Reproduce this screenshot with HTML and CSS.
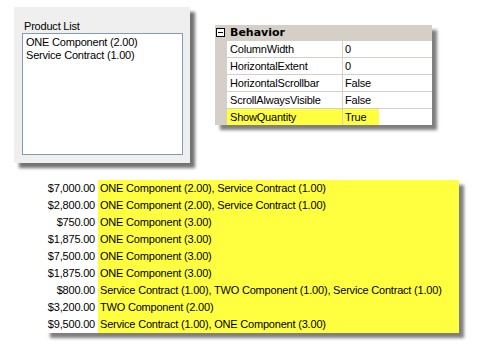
FILE: index.html
```html
<!DOCTYPE html>
<html>
<head>
<meta charset="utf-8">
<link rel="stylesheet" href="styles.css">
</head>
<body>
<div class="top">
  <div class="panel">
    <div class="label">Product List</div>
    <div class="listbox">
      <div>ONE Component (2.00)</div>
      <div>Service Contract (1.00)</div>
    </div>
  </div>
  <div class="grid">
    <div class="header"><span class="minus"></span><span class="cat">Behavior</span></div>
    <div class="row"><span class="name">ColumnWidth</span><span class="val">0</span></div>
    <div class="row"><span class="name">HorizontalExtent</span><span class="val">0</span></div>
    <div class="row"><span class="name">HorizontalScrollbar</span><span class="val">False</span></div>
    <div class="row"><span class="name">ScrollAlwaysVisible</span><span class="val">False</span></div>
    <div class="row"><span class="name hl">ShowQuantity</span><span class="val"><span class="hlv">True</span></span></div>
  </div>
</div>
<div class="table">
  <div class="trow"><span class="amt">$7,000.00</span><span class="desc">ONE Component (2.00), Service Contract (1.00)</span></div>
  <div class="trow"><span class="amt">$2,800.00</span><span class="desc">ONE Component (2.00), Service Contract (1.00)</span></div>
  <div class="trow"><span class="amt">$750.00</span><span class="desc">ONE Component (3.00)</span></div>
  <div class="trow"><span class="amt">$1,875.00</span><span class="desc">ONE Component (3.00)</span></div>
  <div class="trow"><span class="amt">$7,500.00</span><span class="desc">ONE Component (3.00)</span></div>
  <div class="trow"><span class="amt">$1,875.00</span><span class="desc">ONE Component (3.00)</span></div>
  <div class="trow"><span class="amt">$800.00</span><span class="desc">Service Contract (1.00), TWO Component (1.00), Service Contract (1.00)</span></div>
  <div class="trow"><span class="amt">$3,200.00</span><span class="desc">TWO Component (2.00)</span></div>
  <div class="trow"><span class="amt">$9,500.00</span><span class="desc">Service Contract (1.00), ONE Component (3.00)</span></div>
</div>
</body>
</html>
```
FILE: styles.css
```css
* { box-sizing: border-box; }
html, body { margin: 0; padding: 0; background: #fff; }
body {
  width: 500px;
  height: 351px;
  overflow: hidden;
  font-family: "Liberation Sans", Arial, sans-serif;
  font-size: 11px;
  letter-spacing: -0.2px;
  color: #000;
}
.top {
  display: flex;
  align-items: flex-start;
}
.panel {
  margin: 7px 0 0 14px;
  width: 176px;
  height: 156px;
  background: #efefef;
  padding: 12px 8px 0 8px;
  box-shadow: 5px 5px 3px rgba(0,0,0,0.55);
}
.label {
  line-height: 14px;
  padding-left: 2px;
}
.listbox {
  width: 161px;
  height: 122px;
  border: 1px solid #7f9db9;
  background: #fff;
  padding: 2px 3px;
  line-height: 13px;
}
.grid {
  margin: 25px 0 0 25px;
  width: 217px;
  background: #d4d0c8;
  box-shadow: 5px 5px 3px rgba(0,0,0,0.5);
}
.header {
  height: 15px;
  display: flex;
  align-items: center;
}
.minus {
  width: 9px;
  height: 9px;
  margin-left: 1px;
  border: 1px solid #000;
  background: #fff;
  position: relative;
}
.minus::after {
  content: "";
  position: absolute;
  left: 1px;
  top: 3px;
  width: 5px;
  height: 1px;
  background: #000;
}
.cat {
  font-weight: bold;
  margin-left: 5px;
  font-family: "DejaVu Sans", "Liberation Sans", sans-serif;
  font-size: 11px;
  letter-spacing: 0;
}
.row {
  display: flex;
  height: 17px;
  margin-left: 12px;
  border-top: 1px solid #d4d0c8;
}
.row span.name, .row span.val {
  background: #fff;
  line-height: 16px;
  height: 16px;
}
.name {
  width: 115px;
  padding-left: 3px;
  margin-right: 1px;
}
.val {
  flex: 1;
  padding-left: 2px;
}
.name.hl { background: #ffff40 !important; }
.hlv {
  display: inline-block;
  background: #ffff40;
  width: 36px;
  margin-left: -2px;
  padding-left: 2px;
}
.table {
  margin: 17px 0 0 45px;
  width: 414px;
  box-shadow: 5px 5px 3px rgba(0,0,0,0.5);
  background: #fff;
}
.trow {
  display: flex;
  height: 17px;
  line-height: 17px;
}
.amt {
  width: 53px;
  text-align: right;
  padding-right: 3px;
  background: #fff;
}
.desc {
  flex: 1;
  background: #ffff40;
  padding-left: 2px;
  white-space: nowrap;
}
```
